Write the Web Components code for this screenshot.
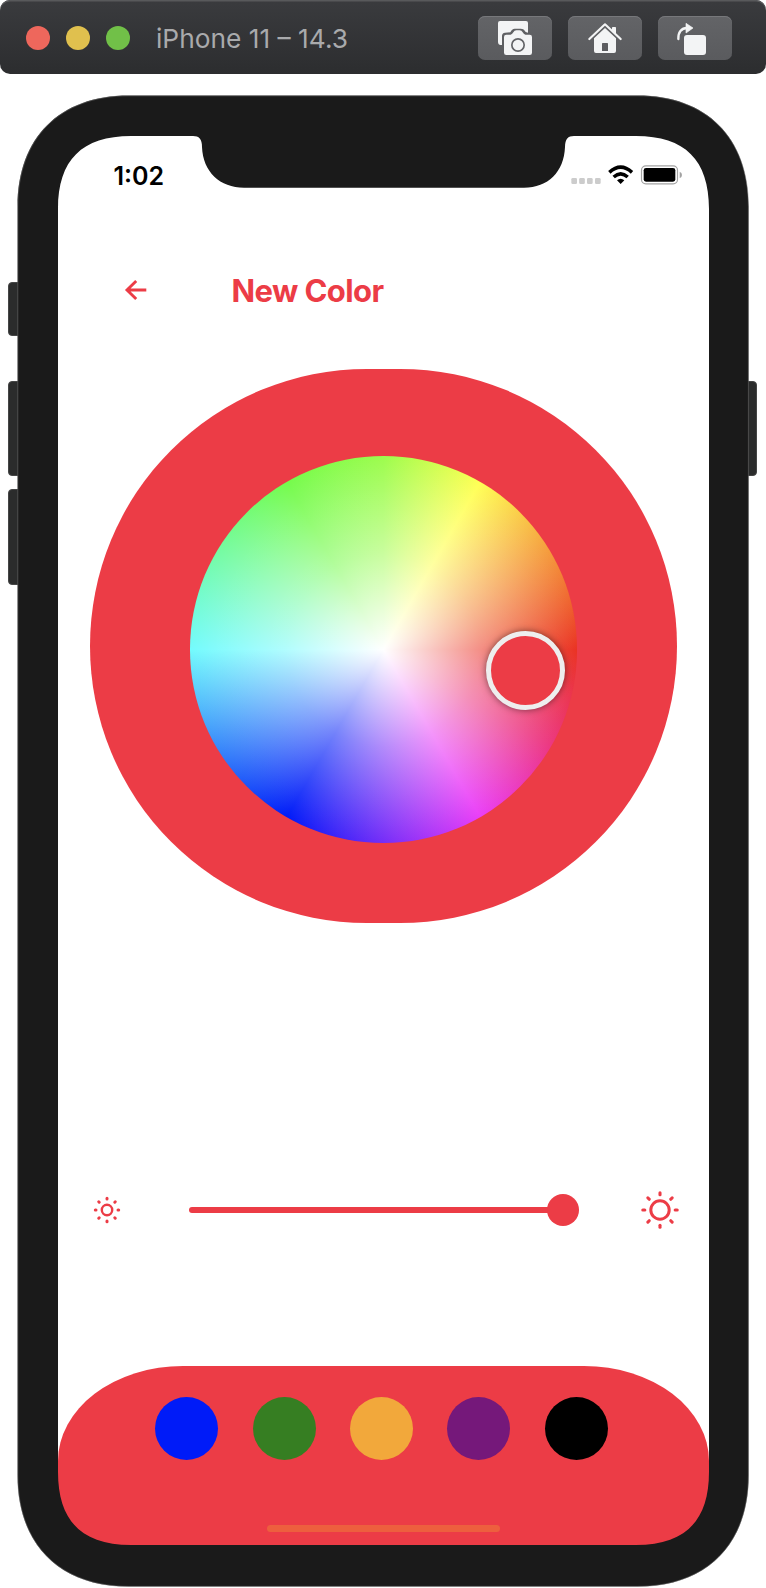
<!DOCTYPE html>
<html lang="en">
<head>
<meta charset="utf-8">
<title>New Color</title>
<style>
  body { margin: 0; background: #fff; font-family: Inter, "Liberation Sans", sans-serif; --accent: #ec3c46; }
</style>
</head>
<body>
<simulator-window name="iPhone 11 – 14.3">
  <phone-device>
    <status-bar time="1:02"></status-bar>
    <page-header>New Color</page-header>
    <color-wheel></color-wheel>
    <brightness-slider></brightness-slider>
    <swatch-dock>
      <color-swatch style="--c:#001bf8"></color-swatch>
      <color-swatch style="--c:#367e22"></color-swatch>
      <color-swatch style="--c:#f2a83b"></color-swatch>
      <color-swatch style="--c:#75187a"></color-swatch>
      <color-swatch style="--c:#000"></color-swatch>
    </swatch-dock>
  </phone-device>
</simulator-window>

<script>
const define = (tag, html) => customElements.define(tag, class extends HTMLElement {
  constructor() {
    super();
    this.attachShadow({ mode: 'open' }).innerHTML = typeof html === 'function' ? html(this) : html;
  }
});

/* Rounded rectangle with smooth corners: each corner starts a px from the vertex, with its control points c px from it. */
const squircle = (x, y, w, h, a, c) => {
  const R = x + w, B = y + h;
  return `M${x + a} ${y}H${R - a}C${R - c} ${y} ${R} ${y + c} ${R} ${y + a}V${B - a}` +
    `C${R} ${B - c} ${R - c} ${B} ${R - a} ${B}H${x + a}C${x + c} ${B} ${x} ${B - c} ${x} ${B - a}V${y + a}C${x} ${y + c} ${x + c} ${y} ${x + a} ${y}Z`;
};

define('tool-button', `
<style>
  :host { display: block; box-sizing: border-box; width: 74px; height: 44px; border-radius: 7px;
    background: linear-gradient(#636467, #5a5b5e); box-shadow: inset 0 1px 0 #77787b; }
  ::slotted(svg) { display: block; width: 74px; height: 44px; }
</style><slot></slot>`);

define('title-bar', el => `
<style>
  :host { display: flex; align-items: center; box-sizing: border-box; height: 74px; padding: 0 34px 0 26px;
    border-radius: 10px; background: linear-gradient(#3a3b3e, #2c2d2f); box-shadow: inset 0 1.5px 0 #58595b; }
  .lights { display: flex; gap: 16px; margin-top: 2px; }
  .lights i { width: 24px; height: 24px; border-radius: 50%; }
  h1 { flex: 1; margin: 3px 0 0 26px; font-size: 26.300px; line-height: 32px; font-weight: 400; color: #a9aaac; white-space: nowrap; }
  .tools { display: flex; gap: 16px; margin-top: 2px; }
</style>
<div class="lights"><i style="background:#ee675c"></i><i style="background:#e0c04e"></i><i style="background:#71c048"></i></div>
<h1>${el.getAttribute('name')}</h1>
<div class="tools">
  <tool-button><svg viewBox="285 48 222 132">
    <path fill="#f3f4f5" d="M351 63H429Q435 63 435 69V98L428 96Q423 86 413 86H395Q387 86 382 97L366 98Q357 99 357 108V135H351Q345 134 345 127V69Q345 63 351 63Z"/>
    <path fill="#f3f4f5" d="M370 104H383Q388 103 391 97Q394 91 400 91H410Q416 91 419 97Q422 103 427 104H440Q447 104 447 111V158Q447 165 440 165H370Q363 165 363 158V111Q363 104 370 104Z"/>
    <circle cx="405" cy="135" r="18.5" fill="none" stroke="#626366" stroke-width="5"/></svg></tool-button>
  <tool-button><svg viewBox="555 48 222 132">
    <path fill="none" stroke="#f3f4f5" stroke-width="6.5" stroke-linecap="round" stroke-linejoin="round" d="M619 117L666 73L713 117"/>
    <path fill="#f3f4f5" d="M687 90V83Q687 81 689 81H697Q699 81 699 83V101Z"/>
    <path fill="#f3f4f5" fill-rule="evenodd" d="M633 115L666 84L699 115V153Q699 159 693 159H639Q633 159 633 153ZM657 131V153H675V131Q675 129 673 129H659Q657 129 657 131Z"/></svg></tool-button>
  <tool-button><svg viewBox="825 48 222 132">
    <rect x="903" y="105" width="66" height="60" rx="9" fill="#f3f4f5"/>
    <path fill="none" stroke="#f3f4f5" stroke-width="7" stroke-linecap="round" d="M886 117C885 97 895 84 912 84"/>
    <path fill="#f3f4f5" stroke="#f3f4f5" stroke-width="2" stroke-linejoin="round" d="M909 70L930 84L909 99Z"/></svg></tool-button>
</div>`);

define('simulator-window', el => `
<style>
  :host { display: flex; flex-direction: column; width: 766px; height: 1588px; background: #fff; overflow: hidden; }
</style>
<title-bar name="${el.getAttribute('name')}"></title-bar><slot></slot>`);

define('phone-device', `
<style>
  :host { display: block; position: relative; height: 1514px; box-sizing: border-box; padding: 62px 57px 43px 58px; }
  main { display: flex; flex-direction: column; width: 651px; height: 1409px; background: #fff; }
  svg { position: absolute; left: 0; top: 0; width: 766px; height: 1514px; pointer-events: none; }
</style>
<main><slot></slot></main>
<svg viewBox="0 74 766 1514">
  <g fill="#2b2c2c" stroke="#454646" stroke-width="1">
    <path d="M18 282.5H12Q8.500 282.500 8.500 286V332Q8.500 335.500 12 335.500H18Z"/>
    <path d="M18 381.500H12Q8.500 381.500 8.500 385V472Q8.500 475.500 12 475.500H18Z"/>
    <path d="M18 489.500H12Q8.500 489.500 8.500 493V581Q8.500 584.500 12 584.500H18Z"/>
    <path d="M748 381.500H753Q756.500 381.500 756.500 385V472Q756.500 475.500 753 475.500H748Z"/>
  </g>
  <path fill="#1a1a1a" fill-rule="evenodd" d="${squircle(17.6, 95.6, 731, 1491, 111, 42)} ${squircle(58, 136, 651, 1409, 73, 24)}"/>
  <path fill="#1a1a1a" d="M190 135V136H193C199 136 202 139 202 147C203 172 220 187.700 244 187.700H524C548 187.700 564 172 565 147C565 139 568 136 574 136H577V135Z"/>
  <path fill="none" stroke="#777" stroke-width=".5" d="${squircle(17.8, 95.8, 730.6, 1490.6, 111, 42)}"/>
</svg>`);

define('status-bar', el => `
<style>
  :host { display: flex; justify-content: space-between; height: 72px; box-sizing: border-box; padding: 0 26px 0 55.500px; }
  time { display: block; margin-top: 23.500px; height: 32px; font-size: 25px; line-height: 32px; font-weight: 600; color: #000; }
  svg { width: 112px; height: 24px; margin-top: 27px; }
</style>
<time>${el.getAttribute('time')}</time>
<svg viewBox="564 489 336 72">
  <g fill="#ccc"><rect x="565" y="534" width="17" height="18" rx="4"/><rect x="588.500" y="534" width="17" height="18" rx="4"/><rect x="612" y="534" width="17" height="18" rx="4"/><rect x="636" y="534" width="17" height="18" rx="4"/></g>
  <g fill="none" stroke="#000" stroke-width="10.500"><path d="M679 517Q713 486 747 517"/><path d="M692 531Q713 512 734 531"/></g>
  <path d="M702 541Q713 532 724 541L713 552Z"/>
  <rect x="775.500" y="497.500" width="108" height="54" rx="13" fill="#fff" stroke="#a2a2a2" stroke-width="3.500"/>
  <rect x="782" y="504" width="95" height="41" rx="7"/>
  <path fill="#a2a2a2" d="M890 515Q897 518 897 525Q897 532 890 535Z"/>
</svg>`);

define('page-header', `
<style>
  :host { display: flex; align-items: center; height: 160px; box-sizing: border-box; padding: 7px 0 0 66px; color: var(--accent); margin-bottom: .5px; }
  svg { width: 24px; height: 22px; margin-top: -4px; }
  h2 { margin: -2px 0 0 83.500px; font-size: 31px; line-height: 40px; font-weight: 700; letter-spacing: -.6px; white-space: nowrap; }
</style>
<svg viewBox="124 279 24 22"><path fill="none" stroke="#ec3c46" stroke-width="2.900" d="M146.300 290H127M136.200 281L127 290L136.200 299"/></svg>
<h2><slot></slot></h2>`);

define('color-wheel', `
<style>
  :host { display: block; box-sizing: border-box; width: 587px; height: 554px; margin-left: 32px; padding: 87.500px 0 0 100.300px; border-radius: 277px; background: var(--accent); }
  .wheel { position: relative; width: 386.700px; height: 386.700px; border-radius: 50%;
    background: radial-gradient(closest-side, #fff, rgba(255,255,255,.45) 50%, rgba(255,255,255,0)),
      conic-gradient(from 90deg, #ea3323, #ec3781 30deg, #ea3ff7 60deg, #001bf8 120deg, #73fbfd 180deg, #75fb4c 240deg, #9dfc4d 270deg, #ffff55 300deg, #ea3323 360deg); }
  .thumb { position: absolute; box-sizing: border-box; left: 296px; top: 175px; width: 79px; height: 79px; border: 5px solid #eee;
    border-radius: 50%; background: var(--accent); box-shadow: 0 0 7px rgba(0,0,0,.5); }
</style>
<div class="wheel"><div class="thumb"></div></div>`);

const sun = (cls, r, w, a, b, rw) => `<svg class="${cls}" viewBox="-20 -20 40 40"><g fill="none" stroke="#ec3c46"><circle r="${r}" stroke-width="${w}"/>` +
  [0, 45, 90, 135, 180, 225, 270, 315].map(t => `<path stroke-linecap="round" stroke-width="${rw}" d="M${a} 0H${b}" transform="rotate(${t})"/>`).join('') + `</g></svg>`;

define('brightness-slider', `
<style>
  :host { display: flex; align-items: center; height: 40px; margin-top: 267.700px; }
  svg { width: 40px; height: 40px; flex: none; }
  .small { margin-left: 28.700px; }
  .track { position: relative; width: 374.300px; height: 6.600px; margin-left: 62px; border-radius: 3.300px; background: var(--accent); }
  .thumb { position: absolute; right: -15.800px; top: -12.700px; width: 32px; height: 32px; border-radius: 50%; background: var(--accent); }
  .large { margin-left: 77.500px; }
</style>
${sun('small', 5.2, 2.4, 11, 11.7, 3)}<div class="track"><div class="thumb"></div></div>${sun('large', 9.2, 3, 15.2, 17.2, 3.1)}`);

define('color-swatch', `
<style>:host { display: block; width: 63px; height: 63px; border-radius: 50%; background: var(--c); }</style>`);

define('swatch-dock', `
<style>
  :host { display: flex; flex-direction: column; align-items: center; justify-content: space-between; box-sizing: border-box; height: 179.300px;
    margin-top: auto; padding: 31.300px 0 12.700px; border-radius: 125px 125px 0 0 / 95px 95px 0 0; background: var(--accent); }
  .row { display: flex; gap: 34.400px; margin-right: 4.200px; }
  .home { width: 232.500px; height: 7.600px; border-radius: 4px; background: #ed5f3e; }
</style>
<div class="row"><slot></slot></div><div class="home"></div>`);
</script>
</body>
</html>
